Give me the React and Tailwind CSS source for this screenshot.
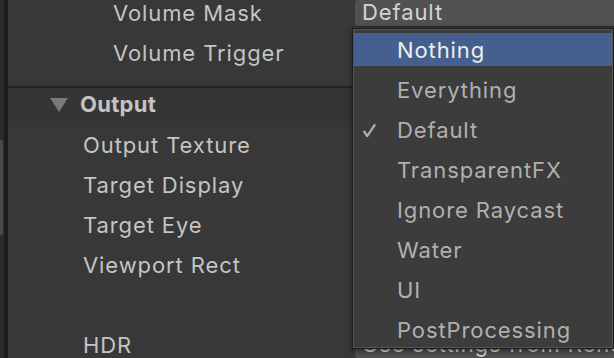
import React from "react";

const font = { fontFamily: "Inter, 'Noto Sans', sans-serif" };

const layers = [
  "Nothing",
  "Everything",
  "Default",
  "TransparentFX",
  "Ignore Raycast",
  "Water",
  "UI",
  "PostProcessing",
];

function Row({ label, indent = "pl-[75px]", children }) {
  return (
    <div className="flex h-[40px] shrink-0 items-center">
      <div
        className={`w-[347px] shrink-0 text-[22px] tracking-[0.9px] text-[#c4c4c4] ${indent}`}
      >
        {label}
      </div>
      <div className="flex-1 min-w-0">{children}</div>
    </div>
  );
}

function Field({ text }) {
  return (
    <div className="h-[27px] flex items-center rounded-l-[3px] bg-[#515151] border-b border-[#2a2a2a] pl-[7px] text-[22px] tracking-[0.9px] text-[#d4d4d4] whitespace-nowrap overflow-hidden">
      {text}
    </div>
  );
}

function Check() {
  return (
    <svg width="15" height="15" viewBox="0 0 16 16" className="shrink-0">
      <path
        d="M2 8.5 L5.5 14 L14 1.5"
        fill="none"
        stroke="#b0b0b0"
        strokeWidth="2.4"
        strokeLinejoin="round"
      />
    </svg>
  );
}

export default function App() {
  return (
    <div
      className="relative w-[614px] h-[358px] overflow-hidden flex bg-[#383838]"
      style={font}
    >
      {/* left gutter with scroll thumb */}
      <div className="w-[4px] shrink-0 bg-[#2b2b2b] pt-[140px]">
        <div className="h-[95px] w-[3px] rounded-r-[2px] bg-[#4a4a4a]" />
      </div>
      <div className="w-[4px] shrink-0 bg-[#1c1c1c]" />

      <div className="flex-1 flex flex-col -mt-[7px]">
        <Row label="Volume Mask" indent="pl-[105px]">
          <Field text="Default" />
        </Row>
        <Row label="Volume Trigger" indent="pl-[105px]" />

        <div className="mt-[13px] h-[2px] shrink-0 bg-[#232323]" />
        <div className="h-[33px] shrink-0 flex items-center bg-[#353535] pl-[42px]">
          <svg width="18" height="16" viewBox="0 0 18 16">
            <path d="M0 1 L18 1 L9 15 Z" fill="#7a7a7a" />
          </svg>
          <span className="ml-[12px] text-[22px] font-bold tracking-[0.3px] text-[#c4c4c4]">
            Output
          </span>
        </div>

        <div className="pt-[4px] shrink-0">
          <Row label="Output Texture" />
          <Row label="Target Display" />
          <Row label="Target Eye" />
          <Row label="Viewport Rect" />
          <Row label="" />
          <Row label="HDR">
            <Field text="Use settings from Render Pipeline Asset" />
          </Row>
        </div>
      </div>

      {/* popup menu */}
      <div className="absolute left-[352px] top-[28px] w-[262px] h-[321px] border border-[#1c1c1c] bg-[#3c3c3c] shadow-[0_2px_6px_rgba(0,0,0,0.5)]">
        <div className="h-full border border-[#555555] pt-[3px] flex flex-col gap-[7px]">
          {layers.map((name, i) => (
            <div
              key={name}
              className={`h-[33px] shrink-0 flex items-center pt-[1px] text-[22px] tracking-[0.9px] ${
                i === 0 ? "bg-[#45608e] text-[#eeeeee]" : "text-[#b0b0b0]"
              }`}
            >
              <div className="w-[43px] pl-[8px] flex items-center">
                {name === "Default" && <Check />}
              </div>
              {name}
            </div>
          ))}
        </div>
      </div>
    </div>
  );
}
